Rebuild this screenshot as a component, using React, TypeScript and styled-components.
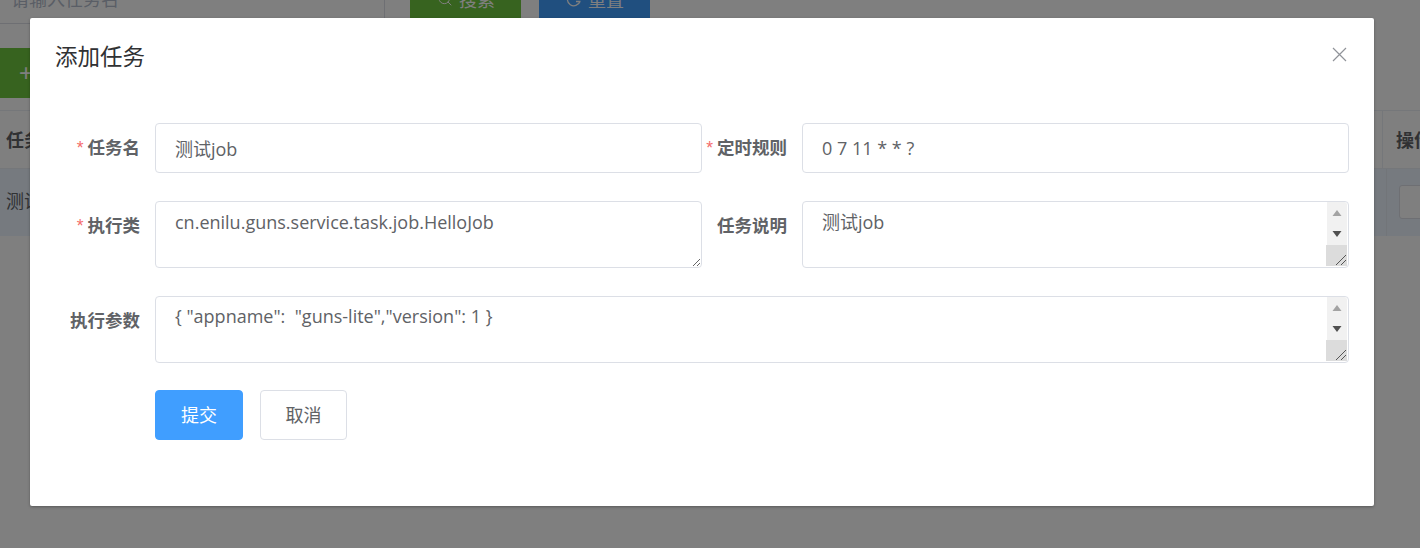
import React from "react";
import styled, { createGlobalStyle } from "styled-components";
import { Search } from "lucide-react";

const FONT = `"Open Sans", "Noto Sans CJK SC", sans-serif`;
const LABEL_FONT = `"Liberation Sans", "Noto Sans CJK SC", sans-serif`;

const Global = createGlobalStyle`
  html, body { margin: 0; padding: 0; height: 548px; overflow: hidden; background: #fff; font-family: ${LABEL_FONT}; }
  * { box-sizing: border-box; }
`;

const Viewport = styled.div`
  position: relative;
  width: 1420px;
  height: 548px;
  overflow: hidden;
`;

const Page = styled.div`
  margin-top: -26px;
  color: #606266;
  font-size: 18px;
`;

const SearchBar = styled.div`
  display: flex;
  height: 50px;
  margin-bottom: 24px;
`;

const SearchInput = styled.div`
  width: 385px;
  height: 50px;
  padding: 1px 11px 0;
  border: 1px solid #dcdfe6;
  border-left: 0;
  line-height: 48px;
  color: #b4bccc;
`;

const SearchButton = styled.div<{ $bg: string; $first?: boolean }>`
  display: flex;
  align-items: center;
  gap: 6px;
  width: 111px;
  height: 50px;
  padding-left: 27px;
  margin-left: ${(p) => (p.$first ? "25px" : "18px")};
  background: ${(p) => p.$bg};
  color: #fff;
  border-radius: 4px;
`;

const AddRow = styled.div`
  height: 62px;
`;

const AddButton = styled.div`
  width: 120px;
  height: 50px;
  padding-left: 19px;
  background: #6fc63e;
  color: #fff;
  font-size: 24px;
  font-weight: 300;
  line-height: 50px;
`;

const Table = styled.div`
  width: 100%;
`;

const HeadRow = styled.div`
  display: flex;
  justify-content: space-between;
  height: 59px;
  border-top: 1px solid #ebeef5;
  border-bottom: 1px solid #ebeef5;
  font-weight: bold;
  line-height: 60px;
`;

const BodyRow = styled.div`
  display: flex;
  justify-content: space-between;
  height: 67px;
  background: #ecf5ff;
  line-height: 67px;
`;

const LeftCell = styled.div`
  padding-left: 6px;
`;

const HeadOpCell = styled.div`
  width: 38px;
  padding-left: 13px;
  border-left: 1px solid #ebeef5;
  white-space: nowrap;
`;

const BodyOpCell = styled.div`
  width: 34px;
  padding-left: 12px;
  border-left: 1px solid #e4ebf3;
`;

const OpButton = styled.div`
  width: 40px;
  height: 34px;
  margin-top: 16px;
  background: #fff;
  border: 1px solid #dcdfe6;
  border-radius: 3px;
`;

const Overlay = styled.div`
  position: absolute;
  inset: 0;
  background: rgba(0, 0, 0, 0.5);
`;

const Dialog = styled.div`
  position: absolute;
  left: 30px;
  top: 18px;
  width: 1344px;
  height: 488px;
  background: #fff;
  border-radius: 2px;
  box-shadow: 0 1px 3px rgba(0, 0, 0, 0.3);
`;

const Header = styled.div`
  display: flex;
  justify-content: space-between;
  height: 105px;
  padding: 24px 27px 0 25px;
`;

const Title = styled.div`
  font-size: 22.5px;
  line-height: 32px;
  color: #303133;
`;

const Close = styled.button`
  width: 15px;
  height: 15px;
  margin-top: 5px;
  padding: 0;
  border: 0;
  background: none;
  color: #909399;
  & svg { display: block; }
`;

const Form = styled.div`
  display: flex;
  flex-direction: column;
  gap: 28px;
`;

const Row = styled.div`
  display: flex;
`;

const Field = styled.div<{ $grow?: boolean }>`
  display: flex;
  width: ${(p) => (p.$grow ? "100%" : "672px")};
  flex: ${(p) => (p.$grow ? "1" : "none")};
`;

const Label = styled.label<{ $w: number; $required?: boolean }>`
  flex: none;
  width: ${(p) => p.$w}px;
  height: 50px;
  padding-right: 15px;
  text-align: right;
  font-size: 17.5px;
  font-weight: bold;
  line-height: 51px;
  color: #606266;
  white-space: nowrap;
  &::before {
    content: ${(p) => (p.$required ? '"*"' : "none")};
    margin-right: 4px;
    color: #f56c6c;
    font-weight: normal;
  }
`;

const TextInput = styled.input`
  width: 547px;
  height: 50px;
  padding: 0 19px 1px;
  border: 1px solid #dcdfe6;
  border-radius: 4px;
  outline: none;
  font: 18px ${FONT};
  color: #606266;
`;

const TextArea = styled.textarea<{ $w: number; $top?: number }>`
  display: block;
  width: ${(p) => p.$w}px;
  height: 67px;
  padding: ${(p) => p.$top ?? 8}px 19px 8px;
  border: 1px solid #dcdfe6;
  border-radius: 4px;
  outline: none;
  font: 18px/1.4 ${FONT};
  color: #606266;
  resize: vertical;
`;

const ScrollWrap = styled.div`
  position: relative;
  height: 67px;
`;

const FixedArea = styled(TextArea)`
  resize: none;
`;

const ScrollBar = styled.div`
  position: absolute;
  top: 1px;
  right: 2px;
  bottom: 2px;
  width: 21px;
  display: flex;
  flex-direction: column;
  align-items: flex-end;
  pointer-events: none;
`;

const ScrollTrack = styled.div`
  display: flex;
  flex: 1;
  flex-direction: column;
  align-items: center;
  justify-content: space-around;
  width: 20px;
  background: #f1f1f1;
  border-top-right-radius: 3px;
  & svg { display: block; }
`;

const Resizer = styled.div`
  flex: none;
  width: 21px;
  height: 21px;
  background: #dcdcdc;
  & svg { display: block; }
`;

const Actions = styled.div`
  display: flex;
  gap: 17px;
  margin-top: -1px;
  padding-left: 125px;
`;

const Btn = styled.button<{ $primary?: boolean }>`
  height: 50px;
  width: ${(p) => (p.$primary ? "88px" : "87px")};
  padding: 0 0 2px;
  border: 1px solid ${(p) => (p.$primary ? "#409eff" : "#dcdfe6")};
  border-radius: 4px;
  background: ${(p) => (p.$primary ? "#409eff" : "#fff")};
  color: ${(p) => (p.$primary ? "#fff" : "#606266")};
  font: 18px ${LABEL_FONT};
`;

function ScrollingArea({ w, value, top }: { w: number; value: string; top?: number }) {
  return (
    <ScrollWrap>
      <FixedArea $w={w} $top={top} defaultValue={value} />
      <ScrollBar aria-hidden="true">
        <ScrollTrack>
          <svg width="10" height="6" viewBox="0 0 10 6"><path d="M0.5 6h9L5 0z" fill="#a3a3a3" /></svg>
          <svg width="10" height="6" viewBox="0 0 10 6"><path d="M0.5 0h9L5 6z" fill="#505050" /></svg>
        </ScrollTrack>
        <Resizer>
          <svg width="21" height="21" viewBox="0 0 21 21" fill="none" stroke="#555">
            <path d="M10 20 20 10M15 20 20 15" />
          </svg>
        </Resizer>
      </ScrollBar>
    </ScrollWrap>
  );
}

export default function App() {
  return (
    <Viewport>
      <Global />
      <Page>
        <SearchBar>
          <SearchInput>请输入任务名</SearchInput>
          <SearchButton $bg="#6fc63e" $first><Search size={16} strokeWidth={1.5} />搜索</SearchButton>
          <SearchButton $bg="#409eff">
            <svg width="16" height="16" viewBox="0 0 16 16" fill="none" stroke="currentColor" strokeWidth="1.3">
              <path d="M14 10.5A6.5 6.5 0 1 1 13.500 5M10 10.5h4.500" />
            </svg>
            重置
          </SearchButton>
        </SearchBar>
        <AddRow><AddButton>+</AddButton></AddRow>
        <Table>
          <HeadRow>
            <LeftCell>任务名</LeftCell>
            <HeadOpCell>操作</HeadOpCell>
          </HeadRow>
          <BodyRow>
            <LeftCell>测试job</LeftCell>
            <BodyOpCell><OpButton /></BodyOpCell>
          </BodyRow>
        </Table>
      </Page>
      <Overlay />
      <Dialog>
        <Header>
          <Title>添加任务</Title>
          <Close aria-label="关闭">
            <svg width="15" height="15" viewBox="0 0 15 15" fill="none" stroke="currentColor" strokeWidth="1.2">
              <path d="M1 1 14 14M14 1 1 14" />
            </svg>
          </Close>
        </Header>
        <Form>
          <Row>
            <Field>
              <Label $w={125} $required>任务名</Label>
              <TextInput defaultValue="测试job" />
            </Field>
            <Field>
              <Label $w={100} $required>定时规则</Label>
              <TextInput defaultValue="0 7 11 * * ?" />
            </Field>
          </Row>
          <Row>
            <Field>
              <Label $w={125} $required>执行类</Label>
              <TextArea $w={547} defaultValue="cn.enilu.guns.service.task.job.HelloJob" />
            </Field>
            <Field>
              <Label $w={100}>任务说明</Label>
              <ScrollingArea w={547} value="测试job" />
            </Field>
          </Row>
          <Row>
            <Field $grow>
              <Label $w={125}>执行参数</Label>
              <ScrollingArea w={1194} top={7} value={'{ "appname":  "guns-lite","version": 1 }'} />
            </Field>
          </Row>
          <Actions>
            <Btn $primary>提交</Btn>
            <Btn>取消</Btn>
          </Actions>
        </Form>
      </Dialog>
    </Viewport>
  );
}
